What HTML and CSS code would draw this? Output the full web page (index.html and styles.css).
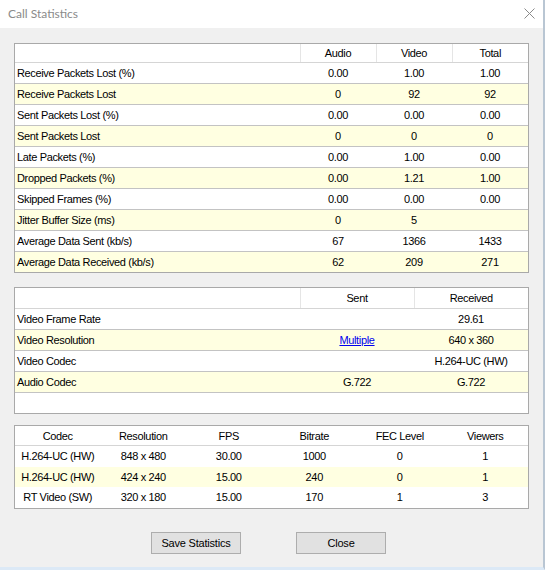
FILE: index.html
```html
<!DOCTYPE html>
<html>
<head>
<meta charset="utf-8">
<link rel="stylesheet" href="styles.css">
</head>
<body>
<div class="window">
  <div class="titlebar">
    <span class="title">Call Statistics</span>
    <svg class="close-x" width="11" height="11" viewBox="0 0 11 11"><path d="M0.5 0.5 L10.5 10.5 M10.5 0.5 L0.5 10.5" stroke="#8a8a8a" stroke-width="1" fill="none"/></svg>
  </div>
  <div class="content">
    <div class="list">
      <table class="grid g1">
        <colgroup><col class="c-label1"><col><col><col></colgroup>
        <thead><tr><th class="lab"></th><th>Audio</th><th>Video</th><th class="last">Total</th></tr></thead>
        <tbody>
          <tr><td class="lab">Receive Packets Lost (%)</td><td>0.00</td><td>1.00</td><td>1.00</td></tr>
          <tr class="alt"><td class="lab">Receive Packets Lost</td><td>0</td><td>92</td><td>92</td></tr>
          <tr><td class="lab">Sent Packets Lost (%)</td><td>0.00</td><td>0.00</td><td>0.00</td></tr>
          <tr class="alt"><td class="lab">Sent Packets Lost</td><td>0</td><td>0</td><td>0</td></tr>
          <tr><td class="lab">Late Packets (%)</td><td>0.00</td><td>1.00</td><td>0.00</td></tr>
          <tr class="alt"><td class="lab">Dropped Packets (%)</td><td>0.00</td><td>1.21</td><td>1.00</td></tr>
          <tr><td class="lab">Skipped Frames (%)</td><td>0.00</td><td>0.00</td><td>0.00</td></tr>
          <tr class="alt"><td class="lab">Jitter Buffer Size (ms)</td><td>0</td><td>5</td><td></td></tr>
          <tr><td class="lab">Average Data Sent (kb/s)</td><td>67</td><td>1366</td><td>1433</td></tr>
          <tr class="alt"><td class="lab">Average Data Received (kb/s)</td><td>62</td><td>209</td><td>271</td></tr>
        </tbody>
      </table>
    </div>

    <div class="list list2">
      <table class="grid g2">
        <colgroup><col class="c-label2"><col><col></colgroup>
        <thead><tr><th class="lab"></th><th>Sent</th><th class="last">Received</th></tr></thead>
        <tbody>
          <tr><td class="lab">Video Frame Rate</td><td></td><td>29.61</td></tr>
          <tr class="alt"><td class="lab">Video Resolution</td><td><a class="link" href="#">Multiple</a></td><td>640 x 360</td></tr>
          <tr><td class="lab">Video Codec</td><td></td><td>H.264-UC (HW)</td></tr>
          <tr class="alt"><td class="lab">Audio Codec</td><td>G.722</td><td>G.722</td></tr>
        </tbody>
      </table>
      <div class="filler"></div>
    </div>

    <div class="list list3">
      <table class="grid g3">
        <thead><tr><th>Codec</th><th>Resolution</th><th>FPS</th><th>Bitrate</th><th>FEC Level</th><th>Viewers</th></tr></thead>
        <tbody>
          <tr><td>H.264-UC (HW)</td><td>848 x 480</td><td>30.00</td><td>1000</td><td>0</td><td>1</td></tr>
          <tr class="alt"><td>H.264-UC (HW)</td><td>424 x 240</td><td>15.00</td><td>240</td><td>0</td><td>1</td></tr>
          <tr><td>RT Video (SW)</td><td>320 x 180</td><td>15.00</td><td>170</td><td>1</td><td>3</td></tr>
        </tbody>
      </table>
    </div>

    <div class="buttons">
      <button class="btn">Save Statistics</button>
      <button class="btn">Close</button>
    </div>
  </div>
</div>
</body>
</html>
```
FILE: styles.css
```css
html, body {
  margin: 0;
  padding: 0;
  background: #f0f0f0;
}
.window {
  width: 543px;
  height: 567px;
  border-right: 2px solid #b9c6d3;
  border-bottom: 3px solid #dce9f6;
  background: #f0f0f0;
  font-family: "Liberation Sans", Arial, sans-serif;
  font-size: 11px;
  letter-spacing: -0.35px;
  color: #000;
  box-sizing: content-box;
}
.titlebar {
  height: 28px;
  background: #fff;
  display: flex;
  align-items: center;
  justify-content: space-between;
  padding: 0 8px 2px 8px;
  box-sizing: border-box;
}
.title {
  font-family: Lato, "Noto Sans", sans-serif;
  font-size: 12px;
  letter-spacing: 0;
  color: #8a8a8a;
}
.close-x {
  display: block;
}
.content {
  padding: 15px 14px 0 14px;
}
.list {
  background: #fff;
  border: 1px solid #a9a9a9;
  width: 513px;
}
.list2 { margin-top: 14px; }
.list3 { margin-top: 11px; }
.grid {
  width: 513px;
  table-layout: fixed;
  border-collapse: collapse;
  border-spacing: 0;
}
.grid th {
  height: 18px;
  padding: 0;
  font-weight: normal;
  text-align: center;
  border-bottom: 1px solid #d5d5d5;
  border-right: 1px solid #e5e5e5;
  white-space: nowrap;
}
.grid th.last { border-right: none; }
.g2 th { height: 20px; }
.g3 th { border-right: none; height: 19px; }
.grid td {
  height: 20px;
  padding: 0;
  text-align: center;
  border-bottom: 1px solid #c3c3c3;
  white-space: nowrap;
}
.grid td.lab {
  text-align: left;
  padding-left: 2px;
}
.g3 td { border-bottom: none; height: 20.5px; }
.g1 tbody tr:last-child td { border-bottom: none; }
.grid tr.alt td { background: #ffffe1; }
.c-label1 { width: 285px; }
.c-label2 { width: 285px; }
.filler { height: 20px; }
.link {
  color: #0000ee;
  text-decoration: underline;
}
.buttons {
  display: flex;
  justify-content: center;
  gap: 55px;
  margin-top: 23px;
  padding-right: 6px;
}
.btn {
  width: 90px;
  height: 22px;
  background: #e1e1e1;
  border: 1px solid #adadad;
  font-family: "Liberation Sans", Arial, sans-serif;
  font-size: 11px;
  letter-spacing: -0.2px;
  color: #000;
  padding: 0;
}
```
